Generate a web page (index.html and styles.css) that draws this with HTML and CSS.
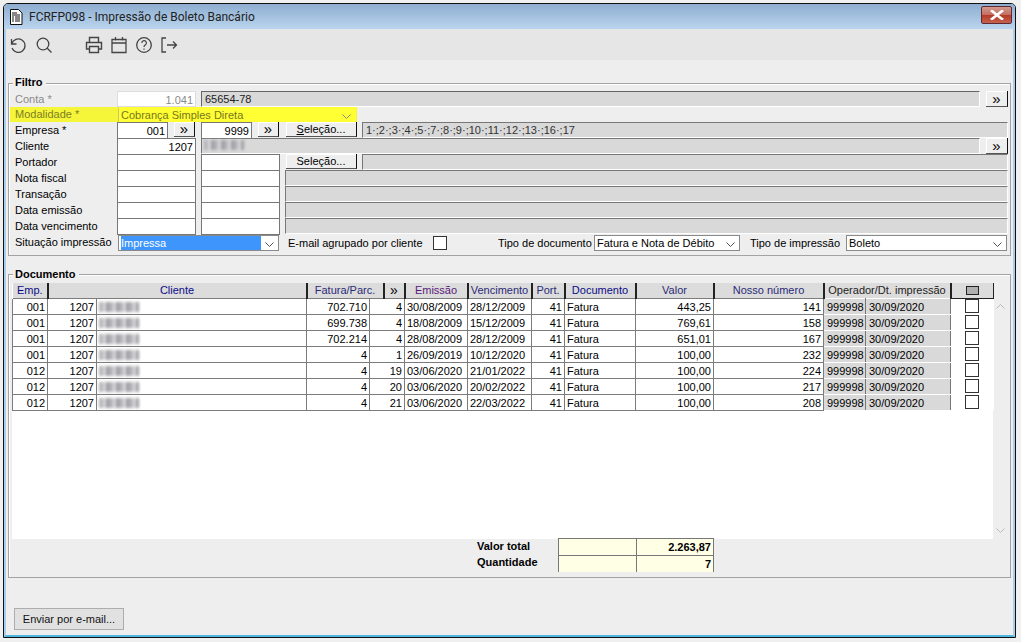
FILE: index.html
```html
<!DOCTYPE html>
<html lang="pt">
<head>
<meta charset="utf-8">
<title>FCRFP098</title>
<link rel="stylesheet" href="styles.css">
</head>
<body>
<div class="window">
  <header class="titlebar">
    <svg class="doc-icon" width="14" height="16" viewBox="0 0 14 16"><path d="M1.5.5h8l3.500 3.500v11.500h-11.500z" fill="#fff" stroke="#111"/><path d="M3 4h5M3 6h8M3 8h2M6 8h5M3 10h2M6 10h5M3 12h2M6 12h5" stroke="#111"/></svg>
    <span class="title">FCRFP098 - Impressão de Boleto Bancário</span>
    <span class="close"><svg width="14" height="10" viewBox="0 0 14 10"><path d="M2 1l10 8M12 1L2 9" stroke="#fff" stroke-width="2.600" stroke-linecap="square"/></svg></span>
  </header>
  <nav class="toolbar">
    <svg class="tool undo" width="18" height="18" viewBox="0 0 18 18"><path d="M2.500 3v5h5M2.800 8A6.700 6.700 0 1 1 3 12" fill="none" stroke="#444" stroke-width="1.300"/></svg>
    <svg class="tool" width="18" height="18" viewBox="0 0 18 18"><circle cx="8" cy="8" r="5.800" fill="none" stroke="#444" stroke-width="1.300"/><path d="M12.200 12.200l4.300 4.300" stroke="#444" stroke-width="1.300"/></svg>
    <svg class="tool print" width="18" height="18" viewBox="0 0 18 18"><path d="M4.500 6V1.500h9V6M4.500 13H1.500V6.500h15V13h-3M4.500 10.500h9v6h-9z" fill="none" stroke="#444" stroke-width="1.400"/></svg>
    <svg class="tool" width="18" height="18" viewBox="0 0 18 18"><path d="M2 3.500h14v13H2zM2 7h14M5.500 1v3.500M12.500 1v3.500" fill="none" stroke="#444" stroke-width="1.300"/></svg>
    <svg class="tool" width="18" height="18" viewBox="0 0 18 18"><circle cx="9" cy="9" r="7.300" fill="none" stroke="#444" stroke-width="1.300"/><path d="M6.800 7a2.300 2.300 0 1 1 3.400 2c-.8.500-1.200 1-1.200 2" fill="none" stroke="#444" stroke-width="1.200"/><path d="M9 12.500v1.300" stroke="#444" stroke-width="1.200"/></svg>
    <svg class="tool" width="18" height="18" viewBox="0 0 18 18"><path d="M6 2H2v14h4M7 9h9.500M13 5.500L16.500 9 13 12.500" fill="none" stroke="#444" stroke-width="1.300"/></svg>
  </nav>
  <main class="content">
    <section class="group filtro">
      <h2 class="legend">Filtro</h2>
      <div class="row">
        <label class="lbl muted">Conta *</label>
        <span class="in num disabled">1.041</span><i></i>
        <div class="wide-btn"><span class="ro dark">65654-78</span><button class="btn arrow">»</button></div>
      </div>
      <div class="row mod">
        <label class="lbl olive">Modalidade *</label>
        <span class="sel yellow">Cobrança Simples Direta<svg class="chev" width="9" height="5" viewBox="0 0 9 5"><path d="M.5.500l4 4 4-4" fill="none" stroke="#888"/></svg></span>
      </div>
      <div class="row">
        <label class="lbl">Empresa *</label>
        <div class="pair"><span class="in num">001</span><button class="btn arrow small">»</button></div><i></i>
        <div class="pair"><span class="in num">9999</span><button class="btn arrow small">»</button></div><i></i>
        <button class="btn sel-btn"><u>S</u>eleção...</button><i></i>
        <span class="ro">1·;2·;3·;4·;5·;7·;8·;9·;10·;11·;12·;13·;16·;17</span>
      </div>
      <div class="row">
        <label class="lbl">Cliente</label>
        <span class="in num">1207</span><i></i>
        <div class="wide-btn"><span class="ro"><span class="blur short"></span></span><button class="btn arrow">»</button></div>
      </div>
      <div class="row">
        <label class="lbl">Portador</label>
        <span class="in"></span><i></i><span class="in"></span><i></i>
        <button class="btn sel-btn">Seleção...</button><i></i><span class="ro"></span>
      </div>
      <div class="row"><label class="lbl">Nota fiscal</label><span class="in"></span><i></i><span class="in"></span><i></i><span class="ro full"></span></div>
      <div class="row"><label class="lbl">Transação</label><span class="in"></span><i></i><span class="in"></span><i></i><span class="ro full"></span></div>
      <div class="row"><label class="lbl">Data emissão</label><span class="in"></span><i></i><span class="in"></span><i></i><span class="ro full"></span></div>
      <div class="row"><label class="lbl">Data vencimento</label><span class="in"></span><i></i><span class="in"></span><i></i><span class="ro full"></span></div>
      <div class="opts">
        <label class="lbl">Situação impressão</label>
        <span class="sel situ"><span class="hl">Impressa</span><svg class="chev" width="9" height="5" viewBox="0 0 9 5"><path d="M.5.500l4 4 4-4" fill="none" stroke="#555"/></svg></span>
        <span class="txt email">E-mail agrupado por cliente</span>
        <span class="check"></span>
        <span class="txt tipo-doc">Tipo de documento</span>
        <span class="sel tdoc">Fatura e Nota de Débito<svg class="chev" width="9" height="5" viewBox="0 0 9 5"><path d="M.5.500l4 4 4-4" fill="none" stroke="#555"/></svg></span>
        <span class="txt tipo-imp">Tipo de impressão</span>
        <span class="sel timp">Boleto<svg class="chev" width="9" height="5" viewBox="0 0 9 5"><path d="M.5.500l4 4 4-4" fill="none" stroke="#555"/></svg></span>
      </div>
    </section>
    <section class="group documento">
      <h2 class="legend">Documento</h2>
      <div class="grid-wrap">
        <div class="grid-area">
          <table class="grid">
            <colgroup>
              <col class="c-emp"><col class="c-cod"><col class="c-nome"><col class="c-fat"><col class="c-par1"><col class="c-par2"><col class="c-em"><col class="c-ve"><col class="c-po"><col class="c-doc"><col class="c-val"><col class="c-nos"><col class="c-op"><col class="c-dt"><col class="c-ck">
            </colgroup>
            <thead>
              <tr>
                <th class="blue">Emp.</th><th class="blue" colspan="2">Cliente</th><th class="slate" colspan="2">Fatura/Parc.</th><th class="more">»</th><th class="purple">Emissão</th><th class="slate">Vencimento</th><th class="slate">Port.</th><th class="blue">Documento</th><th class="slate">Valor</th><th class="slate">Nosso número</th><th class="dark-h" colspan="2">Operador/Dt. impressão</th><th class="ck-h"><span class="mini"></span></th>
              </tr>
            </thead>
            <tbody>
              <tr><td class="r">001</td><td class="r">1207</td><td><span class="blur"></span></td><td class="r">702.710</td><td class="r" colspan="2">4</td><td>30/08/2009</td><td>28/12/2009</td><td class="r">41</td><td>Fatura</td><td class="r">443,25</td><td class="r">141</td><td class="gr">999998</td><td class="gr">30/09/2020</td><td class="ck"><span class="check"></span></td></tr>
              <tr><td class="r">001</td><td class="r">1207</td><td><span class="blur"></span></td><td class="r">699.738</td><td class="r" colspan="2">4</td><td>18/08/2009</td><td>15/12/2009</td><td class="r">41</td><td>Fatura</td><td class="r">769,61</td><td class="r">158</td><td class="gr">999998</td><td class="gr">30/09/2020</td><td class="ck"><span class="check"></span></td></tr>
              <tr><td class="r">001</td><td class="r">1207</td><td><span class="blur"></span></td><td class="r">702.214</td><td class="r" colspan="2">4</td><td>28/08/2009</td><td>28/12/2009</td><td class="r">41</td><td>Fatura</td><td class="r">651,01</td><td class="r">167</td><td class="gr">999998</td><td class="gr">30/09/2020</td><td class="ck"><span class="check"></span></td></tr>
              <tr><td class="r">001</td><td class="r">1207</td><td><span class="blur"></span></td><td class="r">4</td><td class="r" colspan="2">1</td><td>26/09/2019</td><td>10/12/2020</td><td class="r">41</td><td>Fatura</td><td class="r">100,00</td><td class="r">232</td><td class="gr">999998</td><td class="gr">30/09/2020</td><td class="ck"><span class="check"></span></td></tr>
              <tr><td class="r">012</td><td class="r">1207</td><td><span class="blur"></span></td><td class="r">4</td><td class="r" colspan="2">19</td><td>03/06/2020</td><td>21/01/2022</td><td class="r">41</td><td>Fatura</td><td class="r">100,00</td><td class="r">224</td><td class="gr">999998</td><td class="gr">30/09/2020</td><td class="ck"><span class="check"></span></td></tr>
              <tr><td class="r">012</td><td class="r">1207</td><td><span class="blur"></span></td><td class="r">4</td><td class="r" colspan="2">20</td><td>03/06/2020</td><td>20/02/2022</td><td class="r">41</td><td>Fatura</td><td class="r">100,00</td><td class="r">217</td><td class="gr">999998</td><td class="gr">30/09/2020</td><td class="ck"><span class="check"></span></td></tr>
              <tr><td class="r">012</td><td class="r">1207</td><td><span class="blur"></span></td><td class="r">4</td><td class="r" colspan="2">21</td><td>03/06/2020</td><td>22/03/2022</td><td class="r">41</td><td>Fatura</td><td class="r">100,00</td><td class="r">208</td><td class="gr">999998</td><td class="gr">30/09/2020</td><td class="ck"><span class="check"></span></td></tr>
            </tbody>
          </table>
        </div>
        <div class="scroll">
          <svg width="9" height="5" viewBox="0 0 9 5"><path d="M.5 4.500l4-4 4 4" fill="none" stroke="#bbb"/></svg>
          <svg width="9" height="5" viewBox="0 0 9 5"><path d="M.5.500l4 4 4-4" fill="none" stroke="#bbb"/></svg>
        </div>
      </div>
      <div class="totals">
        <div class="t-labels"><b>Valor total</b><b>Quantidade</b></div>
        <div class="t-grid">
          <span class="t-cell"></span><span class="t-cell val">2.263,87</span>
          <span class="t-cell"></span><span class="t-cell val">7</span>
        </div>
      </div>
    </section>
    <footer class="foot"><button class="send">Enviar por e-mail...</button></footer>
  </main>
</div>
</body>
</html>
```

FILE: styles.css
```css
* { box-sizing: border-box; }
html, body { margin: 0; height: 100%; }
body {
  width: 1021px;
  height: 642px;
  overflow: hidden;
  background: #f0f0f0;
  font: 11px/16px "Liberation Sans", Arial, sans-serif;
  color: #000;
  padding: 3px 5px 4px 3px;
}
.window {
  height: 635px;
  display: flex;
  flex-direction: column;
  border: 1px solid #111;
  border-top-left-radius: 5px;
  border-top-right-radius: 5px;
  overflow: hidden;
  background: #eee;
}
.titlebar {
  height: 25px;
  flex: none;
  display: flex;
  align-items: center;
  padding: 0 3px 0 5px;
  background: linear-gradient(#8eaed0, #b9d4ee);
}
.doc-icon { margin-right: 6px; }
.title { font: 12px Roboto, "Noto Sans", sans-serif; color: #222; flex: 1; }
.close {
  width: 31px;
  height: 18px;
  margin-top: -4px;
  display: flex;
  align-items: center;
  justify-content: center;
  border: 1px solid #5d2a33;
  border-radius: 2px;
  background: linear-gradient(#d49a8e 0, #c26d60 48%, #b33a26 52%, #c8614e 100%);
}
.toolbar {
  height: 31px;
  flex: none;
  display: flex;
  align-items: center;
  gap: 7px;
  padding: 0 0 0 3px;
  background: #e6e6e6;
  border-left: 2px solid #a9cdea;
  border-right: 2px solid #a9cdea;
}
.tool.undo { margin-right: 1px; }
.tool.print { margin-left: 25px; }
.content {
  flex: 1;
  display: flex;
  flex-direction: column;
  padding: 0 2px 0 2px;
  background: #eee;
  border-left: 2px solid #a9cdea;
  border-right: 2px solid #a9cdea;
  border-bottom: 2px solid #4fb6e0;
}
.group {
  position: relative;
  border: 1px solid #a3a3a3;
  box-shadow: inset 1px 1px 0 #fff;
  flex: none;
}
.legend {
  position: absolute;
  left: 4px;
  top: -9px;
  margin: 0;
  padding: 0 3px 0 2px;
  font: bold 11px/16px "Liberation Sans", sans-serif;
  background: #eee;
}
.filtro .legend { top: -10px; }
.filtro { margin-top: 23px; height: 173px; padding: 7px 2px 0 1px; }
.row {
  display: flex;
  height: 16px;
  padding-left: 5px;
}
.row > i { flex: none; width: 5px; }
.lbl { width: 102px; flex: none; line-height: 17px; }
.muted { color: #8a8a8a; }
.olive { color: #7d7d22; }
.in {
  width: 79px;
  flex: none;
  background: #fff;
  border: 1px solid #777;
  border-bottom: 0;
  padding: 0 2px;
  line-height: 16px;
}
.row:nth-last-child(2) .in { height: 17px; border-bottom: 1px solid #777; }
.num { text-align: right; }
.disabled { color: #8a8a8a; border: 1px solid #ddd; }
.pair { width: 79px; flex: none; display: flex; justify-content: space-between; }
.pair .in { width: 51px; }
.ro {
  flex: 1;
  min-width: 0;
  background: #d9d9d9;
  border: 1px solid #fff;
  border-top-color: #777;
  border-left-color: #777;
  padding: 0 3px;
  line-height: 15px;
  display: block;
  color: #333;
}
.dark { color: #222; border-top-color: #666; border-left-color: #666; }
.wide-btn { flex: 1; min-width: 0; display: flex; gap: 6px; }
.btn {
  font: inherit;
  line-height: 14px;
  padding: 0;
  background: #eee;
  color: #000;
  border: 0;
  border-right: 1px solid #111;
  border-bottom: 1px solid #555;
  box-shadow: inset 1px 1px 0 #fff;
}
.arrow { width: 22px; flex: none; font-size: 15px; line-height: 10px; }
.arrow.small { width: 21px; margin-right: 1px; height: 15px; }
.sel-btn { width: 71px; margin-left: 1px; flex: none; height: 15px; }
.mod { background: #f5f53a; width: 347px; margin-left: 0; padding-left: 5px; height: 15px; }
.mod .lbl { width: 103px; line-height: 15px; }
.sel {
  position: relative;
  display: block;
  flex: none;
  background: #fff;
  border: 1px solid #8a8a8a;
  padding: 0 2px;
  line-height: 14px;
}
.chev { position: absolute; right: 4px; top: 6px; }
.yellow { width: 238px; margin-left: 0; background: #ffff33; border-color: transparent; color: #77771f; border-left-color: #c9c96b; }
.opts {
  display: flex;
  align-items: center;
  height: 17px;
  margin-top: 0;
  padding-left: 5px;
}
.situ { width: 161px; margin-left: 1px; height: 16px; }
.hl { display: block; width: 140px; background: #3e96fc; color: #fff; }
.txt { flex: none; }
.email { margin-left: 9px; width: 145px; }
.tipo-doc { margin-left: 51px; width: 96px; }
.tdoc { width: 146px; height: 16px; }
.tipo-imp { margin-left: 10px; width: 96px; }
.timp { width: 161px; height: 16px; }
.check {
  display: block;
  width: 14px;
  height: 14px;
  background: #fff;
  border: 1px solid #333;
}
.documento { margin-top: 18px; height: 304px; padding: 8px 0 0 3px; }
.grid-wrap { display: flex; height: 256px; }
.grid-area { width: 981px; background: #fff; }
.grid { table-layout: fixed; width: 981px; border-collapse: collapse; }
.c-emp { width: 35px; } .c-cod { width: 49px; } .c-nome { width: 210px; } .c-fat { width: 63px; }
.c-par1 { width: 14px; } .c-par2 { width: 21px; } .c-em { width: 63px; } .c-ve { width: 64px; } .c-po { width: 33px; }
.c-doc { width: 71px; } .c-val { width: 78px; } .c-nos { width: 110px; } .c-op { width: 42px; }
.c-dt { width: 85px; } .c-ck { width: 43px; }
.grid th {
  height: 15px;
  padding: 1px 0 0;
  font: 11px/13px "Liberation Sans", sans-serif;
  text-align: center;
  background: #dcdcdc;
  border-right: 2px solid #222;
  border-left: 1px solid #fff;
  white-space: nowrap;
  overflow: hidden;
}
.grid th.more { font-size: 14px; line-height: 13px; padding: 0; }
.blue { color: #0b0b8a; }
.slate { color: #2b2b78; }
.purple { color: #5a1a78; }
.dark-h { color: #222; }
.grid tbody tr { height: 16px; }
.grid td {
  padding: 1px 2px 0;
  height: 16px;
  border: 1px solid #7c7c7c;
  background: #fff;
  line-height: 14px;
  white-space: nowrap;
  overflow: hidden;
}
.grid td:nth-child(10) { padding-left: 3px; }
.r { text-align: right; }
.grid td.gr { background: #d9d9d9; border-color: #fff #777 #fff #fff; padding-left: 3px; padding-right: 0; }
.grid td.ck { border: 0; background: #fff; padding: 0 0 0 14px; }
.mini { display: block; width: 13px; height: 9px; margin: 0 auto; background: #b0b0b0; border: 1px solid #222; }
.grid th.ck-h { border-right: 1px solid #222; border-bottom: 1px solid #222; padding: 0; }
.blur {
  display: block;
  width: 40px;
  height: 10px;
  margin: 1px 0 0 0;
  background: repeating-linear-gradient(90deg, #b4b4b8 0 4px, #dadade 4px 7px, #9c9ca0 7px 10px);
  filter: blur(1.500px);
}
.short { margin: 1px 0 0 -1px; }
.scroll {
  width: 14px;
  padding: 21px 0 6px 3px;
  display: flex;
  flex-direction: column;
  justify-content: space-between;
}
.totals { display: flex; height: 36px; padding-left: 465px; margin-top: -1px; }
.t-labels { width: 81px; display: flex; flex-direction: column; }
.t-labels b { height: 16px; line-height: 16px; }
.t-grid { display: grid; grid-template-columns: 78px 76px; grid-template-rows: 17px 16px; border: 1px solid #777; width: 156px; height: 34px; }
.t-cell { background: #ffffe6; border-right: 1px solid #777; border-bottom: 1px solid #777; padding: 0 2px; line-height: 16px; font-weight: bold; text-align: right; }
.t-cell:nth-child(2n) { border-right: 0; }
.t-cell:nth-child(n+3) { border-bottom: 0; }
.foot { padding: 30px 0 0 6px; }
.send {
  width: 110px;
  height: 22px;
  font: 11px "Liberation Sans", sans-serif;
  color: #111;
  background: #e1e1e1;
  border: 1px solid #adadad;
  padding: 0;
}
```
